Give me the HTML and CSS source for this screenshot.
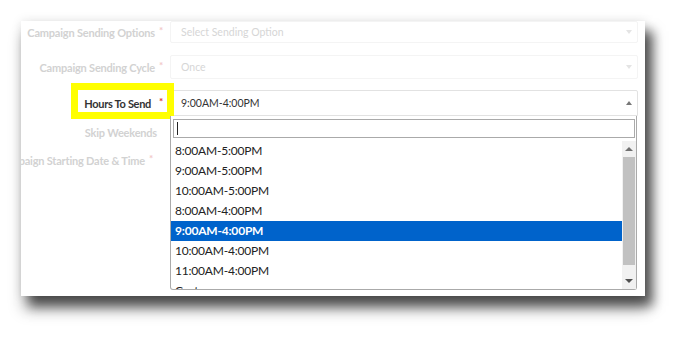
FILE: index.html
```html
<!DOCTYPE html>
<html lang="en">
<head>
    <meta charset="UTF-8">
    <meta name="viewport" content="width=device-width, initial-scale=1.0">
    <title>Hours To Send</title>
    <link rel="stylesheet" href="styles.css">
</head>
<body>
    <div class="page">
    <div class="panel">
        <div class="form-row row-options">
            <label class="form-label faded">Campaign Sending Options<span class="req">*</span></label>
            <div class="form-control faded">Select Sending Option<span class="caret down"></span></div>
        </div>
        <div class="form-row row-cycle">
            <label class="form-label faded">Campaign Sending Cycle<span class="req">*</span></label>
            <div class="form-control faded">Once<span class="caret down"></span></div>
        </div>
        <div class="form-row row-hours">
            <label class="form-label active">Hours To Send<span class="req">*</span></label>
            <div class="select-wrap">
                <div class="form-control open">9:00AM-4:00PM<span class="caret up"></span></div>
                <div class="dropdown">
                    <div class="search"><span class="cursor"></span></div>
                    <div class="results">
                        <ul class="options">
                            <li>8:00AM-5:00PM</li>
                            <li>9:00AM-5:00PM</li>
                            <li>10:00AM-5:00PM</li>
                            <li>8:00AM-4:00PM</li>
                            <li class="selected">9:00AM-4:00PM</li>
                            <li>10:00AM-4:00PM</li>
                            <li>11:00AM-4:00PM</li>
                            <li>Custom</li>
                        </ul>
                        <div class="scrollbar">
                            <span class="sb-btn"><span class="tri up"></span></span>
                            <span class="sb-track"><span class="sb-thumb"></span></span>
                            <span class="sb-btn"><span class="tri down"></span></span>
                        </div>
                    </div>
                </div>
            </div>
        </div>
        <div class="form-row row-skip">
            <label class="form-label faded">Skip Weekends</label>
        </div>
        <div class="form-row row-date">
            <label class="form-label faded">Campaign Starting Date &amp; Time<span class="req">*</span></label>
        </div>
        <div class="highlight"></div>
    </div>
    </div>
</body>
</html>
```
FILE: styles.css
```css
body {
    margin: 0;
    background: #fff;
    font-family: Lato, "Open Sans", Arial, sans-serif;
}
.page {
    height: 338px;
    padding: 21px 0 0 21px;
    box-sizing: border-box;
}
.panel {
    position: relative;
    width: 624px;
    height: 275px;
    background: #fff;
    overflow: hidden;
    box-shadow: 8px 10px 11px rgba(0, 0, 0, 0.6), 2px 14px 14px rgba(0, 0, 0, 0.25), 0 0 10px rgba(0, 0, 0, 0.1);
}
.form-row {
    display: grid;
    grid-template-columns: 142px 468px;
    column-gap: 7px;
    align-items: center;
}
.row-options {
    height: 22px;
}
.row-cycle {
    height: 24px;
    margin-top: 12px;
}
.row-hours {
    height: 26px;
    margin-top: 11px;
}
.row-skip {
    height: 20px;
    margin-top: 6px;
}
.row-date {
    height: 20px;
    margin-top: 8px;
}
.form-label {
    display: flex;
    justify-content: flex-end;
    align-items: flex-start;
    font-size: 11px;
    letter-spacing: -0.2px;
    font-weight: bold;
    white-space: nowrap;
}
.form-label.faded {
    color: #d2d2d2;
}
.form-label.active {
    color: #333;
    letter-spacing: -0.3px;
}
.req {
    color: #d33;
    font-size: 10px;
    margin-left: 4px;
    margin-top: -2px;
}
.active .req {
    margin-left: 8px;
}
.faded .req {
    color: #f2c8c8;
}
.row-skip .form-label {
    padding-right: 6px;
}
.row-date .form-label {
    padding-right: 10px;
}
.form-control {
    position: relative;
    height: 100%;
    box-sizing: border-box;
    border: 1px solid #f4f4f4;
    border-radius: 2px;
    padding-left: 10px;
    display: flex;
    align-items: center;
    font-size: 10.5px;
}
.form-control.faded {
    color: #d6d6d6;
}
.form-control.open {
    border-color: #e2e2e2;
    color: #333;
    border-radius: 2px 2px 0 0;
}
.caret {
    position: absolute;
    right: 5px;
    top: 50%;
    width: 0;
    height: 0;
    border-left: 3px solid transparent;
    border-right: 3px solid transparent;
}
.caret.down {
    border-top: 4px solid #e4e4e4;
    margin-top: -2px;
}
.caret.up {
    border-bottom: 4px solid #777;
    margin-top: -2px;
}
.select-wrap {
    position: relative;
    height: 100%;
}
.dropdown {
    position: absolute;
    top: 26px;
    left: 0;
    width: 467px;
    height: 174px;
    box-sizing: border-box;
    background: #fff;
    border: 1px solid #aaa;
    border-top: none;
    border-radius: 0 0 3px 3px;
    display: flex;
    flex-direction: column;
    z-index: 2;
}
.search {
    margin: 3px 1px 0 2px;
    height: 19px;
    box-sizing: border-box;
    border: 1px solid #aaa;
    padding: 2px 3px;
}
.cursor {
    display: block;
    width: 1px;
    height: 13px;
    background: #222;
}
.results {
    flex: 1;
    display: flex;
    margin-top: 3px;
    overflow: hidden;
}
.options {
    flex: 1;
    list-style: none;
    margin: 0;
    padding: 0;
    overflow: hidden;
}
.options li {
    height: 20px;
    line-height: 20px;
    padding-left: 4px;
    font-size: 12px;
    letter-spacing: -0.2px;
    color: #222;
}
.options li.selected {
    background: #0063cb;
    color: #fff;
    font-weight: bold;
}
.scrollbar {
    width: 14px;
    display: flex;
    flex-direction: column;
    background: #f1f1f1;
}
.sb-btn {
    height: 16px;
    display: flex;
    align-items: center;
    justify-content: center;
}
.sb-track {
    flex: 1;
    padding: 0 1px;
}
.sb-thumb {
    display: block;
    height: 108px;
    background: #c1c1c1;
}
.tri {
    width: 0;
    height: 0;
    border-left: 4px solid transparent;
    border-right: 4px solid transparent;
}
.tri.up {
    border-bottom: 4px solid #707070;
}
.tri.down {
    border-top: 4px solid #505050;
}
.highlight {
    position: absolute;
    left: 50px;
    top: 62px;
    width: 103px;
    height: 36px;
    box-sizing: border-box;
    border: 7px solid #ffff00;
}
```
